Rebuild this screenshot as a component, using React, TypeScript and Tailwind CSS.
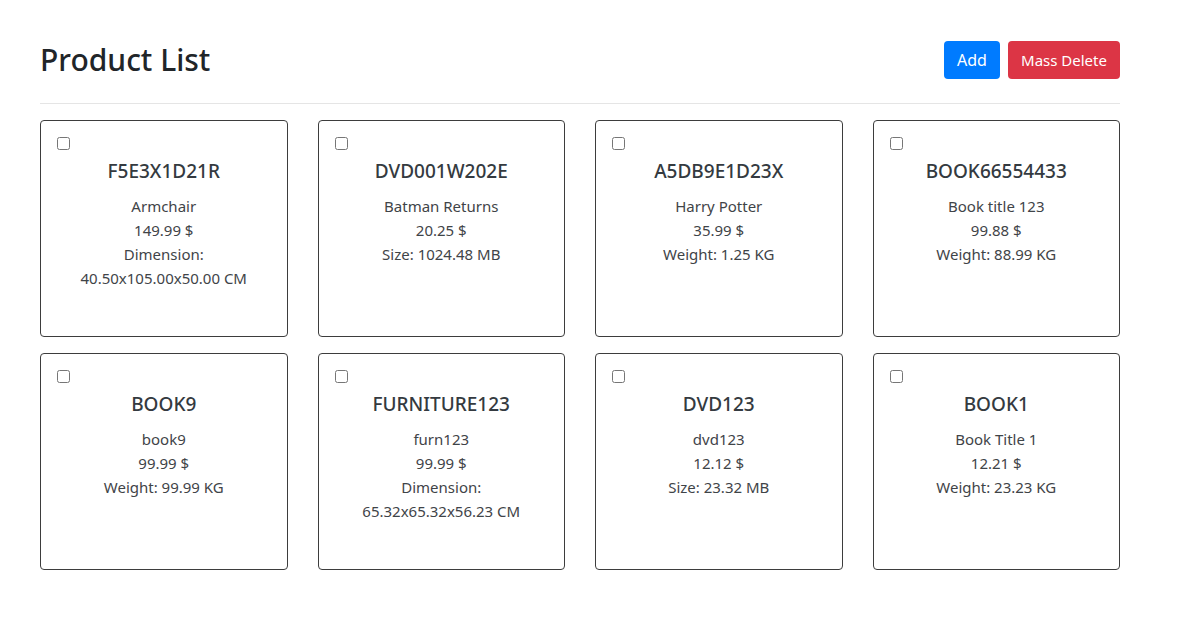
const products = [
  { sku: 'F5E3X1D21R', name: 'Armchair', price: '149.99 $', attr: ['Dimension:', '40.50x105.00x50.00 CM'] },
  { sku: 'DVD001W202E', name: 'Batman Returns', price: '20.25 $', attr: ['Size: 1024.48 MB'] },
  { sku: 'A5DB9E1D23X', name: 'Harry Potter', price: '35.99 $', attr: ['Weight: 1.25 KG'] },
  { sku: 'BOOK66554433', name: 'Book title 123', price: '99.88 $', attr: ['Weight: 88.99 KG'] },
  { sku: 'BOOK9', name: 'book9', price: '99.99 $', attr: ['Weight: 99.99 KG'] },
  { sku: 'FURNITURE123', name: 'furn123', price: '99.99 $', attr: ['Dimension:', '65.32x65.32x56.23 CM'] },
  { sku: 'DVD123', name: 'dvd123', price: '12.12 $', attr: ['Size: 23.32 MB'] },
  { sku: 'BOOK1', name: 'Book Title 1', price: '12.21 $', attr: ['Weight: 23.23 KG'] },
];

export default function App() {
  return (
    <div className="min-h-screen bg-white font-['Noto_Sans',sans-serif] text-[#212529]">
      <div className="ml-[40px] w-[1080px] pt-[41px]">
        {/* Header */}
        <div className="flex items-center justify-between">
          <h1 className="text-[30px] leading-[38px] font-medium text-[#212529]">Product List</h1>
          <div className="flex gap-2">
            <button className="h-[38px] w-[56px] rounded bg-[#007bff] text-white text-[16px] leading-[24px]">Add</button>
            <button className="h-[38px] w-[112px] rounded bg-[#dc3545] text-white text-[15px] leading-[24px]">Mass Delete</button>
          </div>
        </div>
        <div className="mt-6 h-px bg-[#e5e5e5]" />

        {/* Products */}
        <div className="mt-4 grid grid-cols-4 gap-x-[30px] gap-y-4">
          {products.map((p) => (
            <div key={p.sku} className="h-[217px] rounded border border-[#3d3d3d] p-4">
              <input type="checkbox" className="m-0 block h-[13px] w-[13px]" />
              <div className="mt-[9px] text-center text-[19px] leading-[24px] font-medium text-[#343a40]">{p.sku}</div>
              <div className="mt-[11px] text-center text-[15px] leading-[24px] text-[#3f4448]">
                <div>{p.name}</div>
                <div>{p.price}</div>
                {p.attr.map((a) => (
                  <div key={a}>{a}</div>
                ))}
              </div>
            </div>
          ))}
        </div>
      </div>
    </div>
  );
}
